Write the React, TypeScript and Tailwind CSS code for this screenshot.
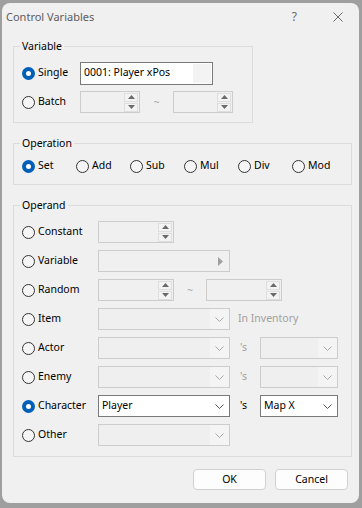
import React from 'react';

const font = { fontFamily: '"Noto Sans", "Liberation Sans", sans-serif' };

const Radio: React.FC<{ checked?: boolean }> = ({ checked }) =>
  checked ? (
    <span className="w-[13px] h-[13px] rounded-full bg-[#005fb8] flex items-center justify-center shrink-0">
      <span className="w-[5px] h-[5px] rounded-full bg-white" />
    </span>
  ) : (
    <span className="w-[13px] h-[13px] rounded-full border border-[#333333] bg-[#f5f5f5] shrink-0" />
  );

const Option: React.FC<{ label: string; checked?: boolean; className?: string }> = ({ label, checked, className }) => (
  <div className={`flex items-center gap-[3px] shrink-0 ${className ?? ''}`}>
    <Radio checked={checked} />
    <span className="text-black">{label}</span>
  </div>
);

const Tri: React.FC<{ up?: boolean }> = ({ up }) => (
  <svg width="7" height="4" viewBox="0 0 7 4">
    <path d={up ? 'M0 4 L3.5 0 L7 4 Z' : 'M0 0 L3.5 4 L7 0 Z'} fill="#6a6a6a" />
  </svg>
);

const Spinner: React.FC<{ w: string }> = ({ w }) => (
  <div className={`${w} h-[22px] border border-[#cccccc] bg-[#f0f0f0] flex justify-end items-center pr-[1px] shrink-0`}>
    <div className="w-[14px] flex flex-col gap-[1px]">
      <div className="h-[9px] border border-[#dedede] bg-[#f3f3f3] flex items-center justify-center"><Tri up /></div>
      <div className="h-[9px] border border-[#dedede] bg-[#f3f3f3] flex items-center justify-center"><Tri /></div>
    </div>
  </div>
);

const Chevron: React.FC<{ color: string }> = ({ color }) => (
  <svg width="9" height="5" viewBox="0 0 9 5">
    <path d="M0.5 0.5 L4.5 4.5 L8.5 0.5" fill="none" stroke={color} strokeWidth="1" />
  </svg>
);

const Combo: React.FC<{ w: string; value?: string; enabled?: boolean }> = ({ w, value, enabled }) => (
  <div
    className={`${w} h-[22px] border flex items-stretch shrink-0 ${
      enabled ? 'border-[#7a7a7a] bg-white' : 'border-[#cccccc] bg-[#efefef]'
    }`}
  >
    <span className="flex-1 flex items-center pl-[3px] text-black">{value}</span>
    <span className={`w-[19px] flex items-center justify-center ${enabled ? '' : 'bg-[#f4f4f4]'}`}>
      <Chevron color={enabled ? '#555555' : '#a8a8a8'} />
    </span>
  </div>
);

const Tilde: React.FC = () => <span className="text-[#a6a6a6] text-[10px]">~</span>;

const Group: React.FC<{ title: string; className?: string; children: React.ReactNode }> = ({ title, className, children }) => (
  <fieldset className={`border border-[#dcdcdc] pl-[6px] ${className ?? ''}`}>
    <legend className="px-[2px] leading-[16px] text-black">{title}</legend>
    {children}
  </fieldset>
);

const Gray: React.FC<{ children: React.ReactNode; className?: string }> = ({ children, className }) => (
  <span className={`text-[#a0a0a0] ${className ?? ''}`}>{children}</span>
);

export default function App() {
  return (
    <div className="w-[362px] h-[508px] bg-[#9f9f9f] pt-[3px] pl-[2px] overflow-hidden text-[10.5px]" style={font}>
      <div className="w-[357px] h-[500px] bg-[#f0f0f0] rounded-[8px] flex flex-col">
        {/* title bar */}
        <div className="h-[28px] flex items-center pl-[4px] pr-[16px] text-[11px] text-[#5c5c5c]">
          <span className="flex-1">Control Variables</span>
          <span className="text-[12px] text-[#6a6a6a] mr-[36px]">?</span>
          <svg width="10" height="10" viewBox="0 0 10 10">
            <path d="M0.5 0.5 L9.5 9.5 M9.5 0.5 L0.5 9.5" stroke="#6a6a6a" strokeWidth="1" />
          </svg>
        </div>

        <div className="pt-[7px] pl-[11px] pr-[7px] flex flex-col">
          <Group title="Variable" className="w-[240px] pt-[8px] pb-[9px]">
            <div className="flex flex-col gap-[7px] pl-[2px]">
              <div className="h-[22px] flex items-center">
                <Option label="Single" checked className="w-[58px]" />
                <div className="w-[133px] h-[23px] border border-[#7a7a7a] bg-white flex items-stretch">
                  <span className="flex-1 flex items-center pl-[3px] text-black">0001: Player xPos</span>
                  <span className="w-[18px] m-[1px] bg-[#f3f3f3]" />
                </div>
              </div>
              <div className="h-[22px] flex items-center">
                <Option label="Batch" className="w-[58px]" />
                <Spinner w="w-[60px]" />
                <div className="w-[33px] flex justify-center"><Tilde /></div>
                <Spinner w="w-[60px]" />
              </div>
            </div>
          </Group>

          <Group title="Operation" className="mt-[12px] pt-[4px] pb-[7px]">
            <div className="h-[22px] flex items-center pl-[2px]">
              <Option label="Set" checked className="w-[54px]" />
              <Option label="Add" className="w-[54px]" />
              <Option label="Sub" className="w-[54px]" />
              <Option label="Mul" className="w-[54px]" />
              <Option label="Div" className="w-[54px]" />
              <Option label="Mod" className="w-[54px]" />
            </div>
          </Group>

          <Group title="Operand" className="mt-[12px] pt-[8px] pb-[10px]">
            <div className="flex flex-col gap-[7px] pl-[2px]">
              <div className="h-[22px] flex items-center">
                <Option label="Constant" className="w-[76px]" />
                <Spinner w="w-[76px]" />
              </div>
              <div className="h-[22px] flex items-center">
                <Option label="Variable" className="w-[76px]" />
                <div className="w-[132px] h-[22px] border border-[#cccccc] bg-[#f0f0f0] flex items-center justify-end pr-[6px]">
                  <svg width="5" height="9" viewBox="0 0 5 9">
                    <path d="M0 0 L5 4.5 L0 9 Z" fill="#a0a0a0" />
                  </svg>
                </div>
              </div>
              <div className="h-[22px] flex items-center">
                <Option label="Random" className="w-[76px]" />
                <Spinner w="w-[76px]" />
                <div className="w-[32px] flex justify-center"><Tilde /></div>
                <Spinner w="w-[76px]" />
              </div>
              <div className="h-[22px] flex items-center">
                <Option label="Item" className="w-[76px]" />
                <Combo w="w-[132px]" />
                <Gray className="ml-[8px]">In Inventory</Gray>
              </div>
              <div className="h-[22px] flex items-center">
                <Option label="Actor" className="w-[76px]" />
                <Combo w="w-[132px]" />
                <Gray className="w-[30px] pl-[10px]">'s</Gray>
                <Combo w="w-[78px]" />
              </div>
              <div className="h-[22px] flex items-center">
                <Option label="Enemy" className="w-[76px]" />
                <Combo w="w-[132px]" />
                <Gray className="w-[30px] pl-[10px]">'s</Gray>
                <Combo w="w-[78px]" />
              </div>
              <div className="h-[22px] flex items-center">
                <Option label="Character" checked className="w-[76px]" />
                <Combo w="w-[132px]" value="Player" enabled />
                <span className="w-[30px] pl-[10px] text-black">'s</span>
                <Combo w="w-[78px]" value="Map X" enabled />
              </div>
              <div className="h-[22px] flex items-center">
                <Option label="Other" className="w-[76px]" />
                <Combo w="w-[132px]" />
              </div>
            </div>
          </Group>

          <div className="mt-[12px] flex justify-end gap-[9px] pr-[4px]">
            <button className="w-[73px] h-[21px] rounded-[4px] border border-[#d0d0d0] bg-[#fdfdfd] text-black text-[10.5px]">OK</button>
            <button className="w-[73px] h-[21px] rounded-[4px] border border-[#d0d0d0] bg-[#fdfdfd] text-black text-[10.5px]">Cancel</button>
          </div>
        </div>
      </div>
    </div>
  );
}
